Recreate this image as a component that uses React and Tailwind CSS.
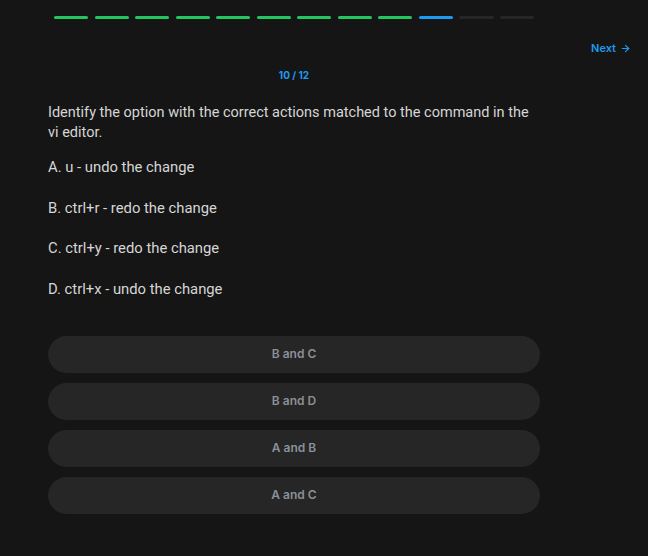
import React from "react";

const segs = ["g","g","g","g","g","g","g","g","g","b","n","n"];
const opts = ["A. u - undo the change","B. ctrl+r - redo the change","C. ctrl+y - redo the change","D. ctrl+x - undo the change"];
const answers = ["B and C","B and D","A and B","A and C"];

export default function App() {
  return (
    <div className="w-full h-[556px] bg-[#151515] font-['Inter',sans-serif] flex flex-col">
      <div className="pt-4 pl-[54px] w-[534px] flex gap-[6.5px]">
        {segs.map((s, i) => (
          <div key={i} className={"flex-1 h-[3px] rounded-full " + (s === "g" ? "bg-[#22c55e]" : s === "b" ? "bg-[#1d9bf0]" : "bg-[#262626]")} />
        ))}
      </div>
      <div className="flex justify-end pr-[17px] mt-[21px] h-[16px] items-center">
        <span className="text-[11px] font-semibold text-[#1d9bf0] flex items-center gap-1">
          Next
          <svg width="11" height="11" viewBox="0 0 24 24" fill="none" stroke="currentColor" strokeWidth="2.5" strokeLinecap="round" strokeLinejoin="round"><path d="M5 12h14"/><path d="m12 5 7 7-7 7"/></svg>
        </span>
      </div>
      <div className="ml-12 w-[492px] flex flex-col">
        <div className="text-center text-[10px] font-bold text-[#1d9bf0] mt-[12px] leading-[14px]">10 / 12</div>
        <p className="mt-[21px] text-[14.5px] leading-[20px] text-[#d6d6d6] font-['Roboto',sans-serif]">
          Identify the option with the correct actions matched to the command in the vi editor.
        </p>
        <div className="mt-[14px] flex flex-col gap-[20.5px] font-['Roboto',sans-serif]">
          {opts.map((o) => (
            <div key={o} className="text-[14.8px] leading-[20px] text-[#d6d6d6]">{o}</div>
          ))}
        </div>
        <div className="mt-[37px] flex flex-col gap-[10px]">
          {answers.map((a) => (
            <div key={a} className="h-[37px] rounded-full bg-[#262626] flex items-center justify-center text-[12px] font-semibold text-[#8b9099]">{a}</div>
          ))}
        </div>
      </div>
    </div>
  );
}
